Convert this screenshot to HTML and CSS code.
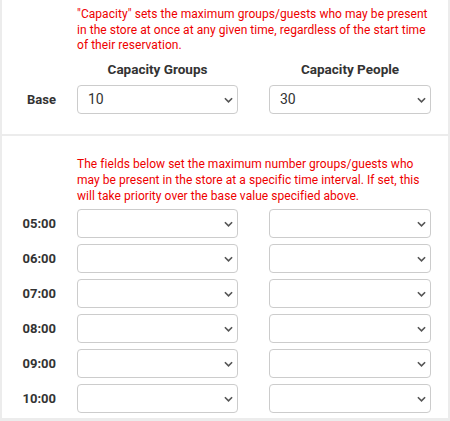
FILE: index.html
```html
<!DOCTYPE html>
<html lang="en">
<head>
    <meta charset="UTF-8">
    <meta name="viewport" content="width=device-width, initial-scale=1.0">
    <title>Capacity</title>
    <link rel="stylesheet" href="styles.css">
</head>
<body>
    <div class="panel">
        <!-- Base capacity -->
        <div class="section base">
            <p class="note">"Capacity" sets the maximum groups/guests who may be present in the store at once at any given time, regardless of the start time of their reservation.</p>
            <div class="head groups">Capacity Groups</div>
            <div class="head people">Capacity People</div>

            <label class="time">Base</label>
            <div class="field">
                <select><option>10</option></select>
                <svg class="chev" viewBox="0 0 10 6"><path d="M1 1l4 4 4-4"/></svg>
            </div>
            <div class="field">
                <select><option>30</option></select>
                <svg class="chev" viewBox="0 0 10 6"><path d="M1 1l4 4 4-4"/></svg>
            </div>
        </div>

        <!-- Per interval -->
        <div class="section slots">
            <p class="note">The fields below set the maximum number groups/guests who may be present in the store at a specific time interval. If set, this will take priority over the base value specified above.</p>

            <label class="time">05:00</label>
            <div class="field"><select><option></option></select><svg class="chev" viewBox="0 0 10 6"><path d="M1 1l4 4 4-4"/></svg></div>
            <div class="field"><select><option></option></select><svg class="chev" viewBox="0 0 10 6"><path d="M1 1l4 4 4-4"/></svg></div>

            <label class="time">06:00</label>
            <div class="field"><select><option></option></select><svg class="chev" viewBox="0 0 10 6"><path d="M1 1l4 4 4-4"/></svg></div>
            <div class="field"><select><option></option></select><svg class="chev" viewBox="0 0 10 6"><path d="M1 1l4 4 4-4"/></svg></div>

            <label class="time">07:00</label>
            <div class="field"><select><option></option></select><svg class="chev" viewBox="0 0 10 6"><path d="M1 1l4 4 4-4"/></svg></div>
            <div class="field"><select><option></option></select><svg class="chev" viewBox="0 0 10 6"><path d="M1 1l4 4 4-4"/></svg></div>

            <label class="time">08:00</label>
            <div class="field"><select><option></option></select><svg class="chev" viewBox="0 0 10 6"><path d="M1 1l4 4 4-4"/></svg></div>
            <div class="field"><select><option></option></select><svg class="chev" viewBox="0 0 10 6"><path d="M1 1l4 4 4-4"/></svg></div>

            <label class="time">09:00</label>
            <div class="field"><select><option></option></select><svg class="chev" viewBox="0 0 10 6"><path d="M1 1l4 4 4-4"/></svg></div>
            <div class="field"><select><option></option></select><svg class="chev" viewBox="0 0 10 6"><path d="M1 1l4 4 4-4"/></svg></div>

            <label class="time">10:00</label>
            <div class="field"><select><option></option></select><svg class="chev" viewBox="0 0 10 6"><path d="M1 1l4 4 4-4"/></svg></div>
            <div class="field"><select><option></option></select><svg class="chev" viewBox="0 0 10 6"><path d="M1 1l4 4 4-4"/></svg></div>
        </div>
    </div>
</body>
</html>
```

FILE: styles.css
```css
/* General */
body {
    margin: 0;
    background: #ececec;
    font-family: Roboto, "Liberation Sans", sans-serif;
    color: #333;
}

.panel {
    margin: 0 2px;
    background: #fff;
}

/* Grid: label | select | select */
.section {
    display: grid;
    grid-template-columns: 44px 161px 162px;
    column-gap: 31px;
    align-items: center;
}

.base {
    padding: 7px 0 20px;
    border-bottom: 2px solid #ececec;
}

.slots {
    padding: 20px 0 5px;
    row-gap: 6px;
}

.note {
    grid-column: 2 / 4;
    margin: 0;
    font-size: 12px;
    line-height: 15.6px;
    letter-spacing: 0.05px;
    color: #e00;
}

.slots .note {
    line-height: 16px;
    margin-bottom: -1px;
}

.head {
    margin: 7px 0 8px;
    font-size: 13.5px;
    line-height: 16px;
    font-weight: bold;
    text-align: center;
}

.groups {
    grid-column: 2;
}

.people {
    grid-column: 3;
}

.time {
    grid-column: 1;
    margin-right: -10px;
    text-align: right;
    font-size: 13px;
    font-weight: bold;
    color: #333;
}

/* Selects */
.field {
    position: relative;
}

.field select {
    display: block;
    width: 100%;
    height: 29px;
    padding: 0 24px 0 10px;
    -webkit-appearance: none;
    appearance: none;
    background: #fff;
    border: 1px solid #ccc;
    border-radius: 4px;
    font-family: inherit;
    font-size: 14px;
    color: #333;
    box-sizing: border-box;
    outline: none;
}

.chev {
    position: absolute;
    right: 5px;
    top: 12px;
    width: 9px;
    height: 6px;
    fill: none;
    stroke: #555;
    stroke-width: 1.8;
    pointer-events: none;
}
```
